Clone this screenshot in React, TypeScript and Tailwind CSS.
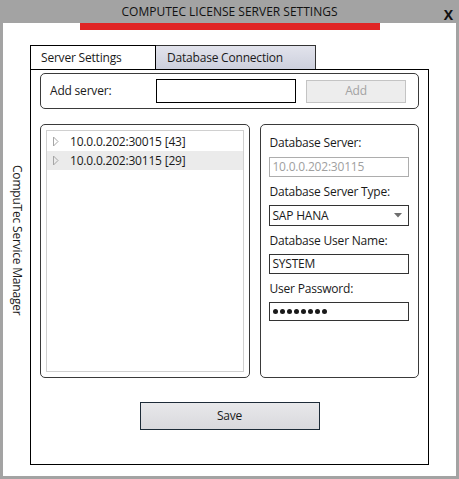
import React from 'react';

const font = "font-['Open_Sans','Noto_Sans',sans-serif] tracking-[-0.2px]";

const TreeRow: React.FC<{ label: string; selected?: boolean }> = ({
    label,
    selected,
}) => (
    <div
        className={`flex h-[19px] items-center ${selected ? 'bg-[#ebebeb]' : ''}`}
    >
        <svg width="16" height="19" viewBox="0 0 16 19" className="ml-[2px]">
            <path d="M4.5 5 L9 9.5 L4.5 14 Z" fill="none" stroke="#a6a6a6" />
        </svg>
        <span className="ml-[5px] text-[12px] text-[#1a1a1a]">{label}</span>
    </div>
);

const FieldLabel: React.FC<{ children: React.ReactNode }> = ({ children }) => (
    <div className="h-[16px] text-[12px] leading-[16px] text-[#1a1a1a]">
        {children}
    </div>
);

export default function App() {
    return (
        <main
            className={`flex h-[479px] w-[459px] flex-col bg-[#a3a3a3] ${font}`}
        >
            <header className="relative flex h-[23px] shrink-0 items-center justify-center">
                <span className="text-[12px] tracking-normal text-[#111]">
                    COMPUTEC LICENSE SERVER SETTINGS
                </span>
                <span className="absolute right-[6px] top-[4px] text-[14px] font-bold text-[#111]">
                    X
                </span>
            </header>
            <div className="mx-[3px] mb-[3px] flex flex-1 bg-white">
                <aside className="flex w-[27px] shrink-0 items-center justify-center pb-[18px]">
                    <span className="text-[12px] text-[#1a1a1a] [writing-mode:vertical-rl]">
                        CompuTec Service Manager
                    </span>
                </aside>
                <div className="flex w-[399px] flex-col">
                    <div className="ml-[50px] h-[7px] w-[300px] bg-[#e02424]" />
                    <div className="mt-[15px] flex h-[24px]">
                        <div className="flex w-[126px] items-center border-l border-t border-r border-black pl-[10px] text-[12px] text-[#1a1a1a]">
                            Server Settings
                        </div>
                        <div className="flex w-[160px] items-center border-t border-r border-[#333] bg-gradient-to-b from-[#e2e3ec] to-[#cdd0dd] pl-[11px] text-[12px] text-[#1a1a1a]">
                            Database Connection
                        </div>
                    </div>
                    <section className="flex h-[396px] flex-col border border-black">
                        <div className="mx-[9px] mt-[3px] flex h-[36px] items-center rounded-[5px] border border-[#3a3a3a] pl-[9px] pr-[12px]">
                            <span className="w-[106px] text-[12px] text-[#1a1a1a]">
                                Add server:
                            </span>
                            <div className="h-[24px] w-[140px] border border-black" />
                            <button className="ml-[10px] h-[23px] w-[100px] border border-[#c4c4c4] bg-[#ededed] text-[12px] text-[#a3a3a3]">
                                Add
                            </button>
                        </div>
                        <div className="mx-[9px] mt-[15px] flex h-[254px] gap-[10px]">
                            <div className="w-[211px] rounded-[5px] border border-[#3a3a3a] p-[5px]">
                                <div className="h-full border border-[#d0d0d0] pt-[1px]">
                                    <TreeRow label="10.0.0.202:30015 [43]" />
                                    <TreeRow label="10.0.0.202:30115 [29]" selected />
                                </div>
                            </div>
                            <div className="flex w-[159px] flex-col rounded-[5px] border border-[#3a3a3a] px-[8px] pt-[10px]">
                                <FieldLabel>Database Server:</FieldLabel>
                                <div className="mt-[6px] flex h-[20px] w-[140px] items-center border border-[#adadad] px-[2px] text-[12px] text-[#a0a0a0]">
                                    10.0.0.202:30115
                                </div>
                                <div className="mt-[7px]">
                                    <FieldLabel>Database Server Type:</FieldLabel>
                                </div>
                                <div className="mt-[5px] flex h-[21px] w-[140px] items-center justify-between border border-[#333] pl-[2px] pr-[6px] text-[12px] text-[#1a1a1a]">
                                    <span>SAP HANA</span>
                                    <svg width="8" height="5" viewBox="0 0 8 5">
                                        <path d="M0 0 H8 L4 4.5 Z" fill="#6e6e6e" />
                                    </svg>
                                </div>
                                <div className="mt-[7px]">
                                    <FieldLabel>Database User Name:</FieldLabel>
                                </div>
                                <div className="mt-[5px] flex h-[20px] w-[140px] items-center border border-[#333] px-[2px] text-[12px] text-[#1a1a1a]">
                                    SYSTEM
                                </div>
                                <div className="mt-[7px]">
                                    <FieldLabel>User Password:</FieldLabel>
                                </div>
                                <div className="mt-[5px] flex h-[19px] w-[140px] items-center gap-[2px] border border-[#333] px-[3px]">
                                    {Array.from({ length: 8 }).map((_, i) => (
                                        <span
                                            key={i}
                                            className="h-[5px] w-[5px] rounded-full bg-[#1a1a1a]"
                                        />
                                    ))}
                                </div>
                            </div>
                        </div>
                        <div className="mt-[24px] flex justify-center">
                            <button className="h-[28px] w-[180px] border border-[#1d2b38] bg-gradient-to-b from-[#e8e8ea] to-[#d9d9dd] text-[12px] text-[#1a1a1a]">
                                Save
                            </button>
                        </div>
                    </section>
                </div>
            </div>
        </main>
    );
}
